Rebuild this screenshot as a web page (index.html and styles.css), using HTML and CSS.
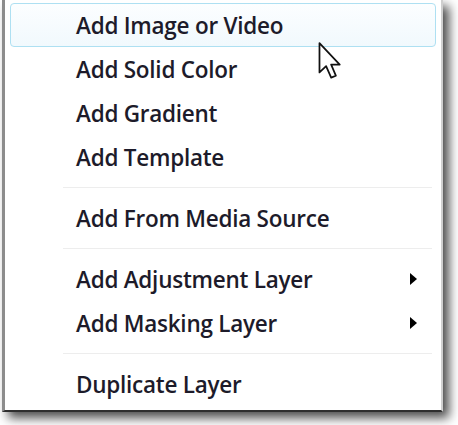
FILE: index.html
```html
<!DOCTYPE html>
<html lang="en">
<head>
    <meta charset="UTF-8">
    <meta name="viewport" content="width=device-width, initial-scale=1.0">
    <title>Layer menu</title>
    <link rel="stylesheet" href="styles.css">
</head>
<body>
    <div class="menu">
        <div class="menu-item active">Add Image or Video</div>
        <div class="menu-item">Add Solid Color</div>
        <div class="menu-item">Add Gradient</div>
        <div class="menu-item">Add Template</div>
        <div class="separator"></div>
        <div class="menu-item">Add From Media Source</div>
        <div class="separator"></div>
        <div class="menu-item has-sub">Add Adjustment Layer<span class="sub-arrow"></span></div>
        <div class="menu-item has-sub">Add Masking Layer<span class="sub-arrow"></span></div>
        <div class="separator"></div>
        <div class="menu-item">Duplicate Layer</div>

        <!-- mouse pointer over the hovered item -->
        <svg class="cursor" width="24" height="37" viewBox="0 0 12 19">
            <path d="M0.6 0.6 L0.6 15.6 L4 12.4 L6.6 18.3 L9 17.3 L6.6 11.6 L11 11.6 Z"
                  fill="#fff" stroke="#111" stroke-width="0.9" stroke-linejoin="round"/>
        </svg>
    </div>
</body>
</html>
```

FILE: styles.css
```css
* {
    box-sizing: border-box;
    margin: 0;
    padding: 0;
}

body {
    background: #fff;
    font-family: "Open Sans", "Noto Sans", Arial, sans-serif;
    width: 458px;
    height: 425px;
    overflow: hidden;
}

.menu {
    position: relative;
    width: 441px;
    margin-left: 2px;
    padding: 3px 0 4px;
    background: #fff;
    border-left: 3px solid #8c8c8c;
    border-right: 2px solid #cfcfcf;
    border-bottom: 2px solid #2e2e2e;
    box-shadow: 6px 6px 10px rgba(0, 0, 0, 0.7);
}

.menu-item {
    display: flex;
    align-items: center;
    height: 44px;
    margin: 0 5px;
    padding-left: 65px;
    padding-right: 18px;
    border: 1px solid transparent;
    border-radius: 4px;
    font-size: 22.5px;
    font-weight: 600;
    letter-spacing: -0.25px;
    color: #1d1b2a;
}

.menu-item.active {
    border-color: #aee0f2;
    background: linear-gradient(#fcfeff, #f1f9fd);
}

.has-sub {
    justify-content: space-between;
}

.sub-arrow {
    width: 0;
    height: 0;
    border-left: 7px solid #000;
    border-top: 6px solid transparent;
    border-bottom: 6px solid transparent;
}

.separator {
    height: 17px;
    margin: 0 9px 0 58px;
    background: linear-gradient(transparent 8px, #ededed 8px, #ededed 9px, transparent 9px);
}

.cursor {
    position: absolute;
    left: 313px;
    top: 42px;
}
```
